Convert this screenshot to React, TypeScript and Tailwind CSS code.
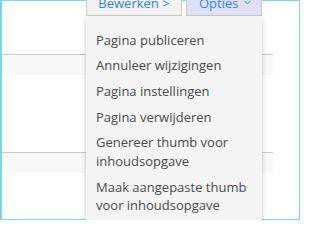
export default function App() {
  const items = [
    "Pagina publiceren",
    "Annuleer wijzigingen",
    "Pagina instellingen",
    "Pagina verwijderen",
    "Genereer thumb voor inhoudsopgave",
    "Maak aangepaste thumb voor inhoudsopgave",
  ];

  return (
    <div className="h-[220px] w-[300px] overflow-hidden bg-white font-['Open_Sans',sans-serif]">
      <div className="h-[220px] border border-l-2 border-[#7fd4ec]">
        <div className="-mt-[15px] flex justify-end pr-[37px]">
          <div className="relative flex gap-[4px]">
            <button className="flex h-[30px] w-[96px] items-center justify-center border border-[#c9c9c9] bg-[#f2f2f2] pt-[5px] text-[13px] text-[#3a84d6]">
              Bewerken &gt;
            </button>
            <button className="flex h-[30px] w-[76px] items-center justify-start gap-[6px] border border-[#c9c9c9] bg-[#dfe0f5] pl-[12px] pt-[5px] text-[13px] text-[#3a84d6]">
              Opties
              <svg width="7" height="5" viewBox="0 0 7 5" className="-mt-[3px]">
                <polyline points="0.5,0.8 3.5,4 6.5,0.8" fill="none" stroke="#3a84d6" strokeWidth="1" />
              </svg>
            </button>
            <ul className="absolute left-0 right-0 top-full z-10 mt-[1px] bg-[#f4f4f4] pt-[10px] pb-2 pl-[10px] pr-2 shadow-[0_2px_5px_rgba(0,0,0,0.22)]">
              {items.map((t) => (
                <li key={t} className="py-[3.6px] text-[13px] leading-[18.5px] text-[#4a4a4a]">
                  {t}
                </li>
              ))}
            </ul>
          </div>
        </div>
        <div className="mr-[26px] mt-[38px]">
          <div className="border-t border-[#c8c8c8]">
            <div className="h-[20px] bg-[#f8f8f8]" />
            <div className="h-[77px]" />
          </div>
          <div className="border-t border-[#c8c8c8]">
            <div className="h-[20px] bg-[#f8f8f8]" />
          </div>
        </div>
      </div>
    </div>
  );
}
